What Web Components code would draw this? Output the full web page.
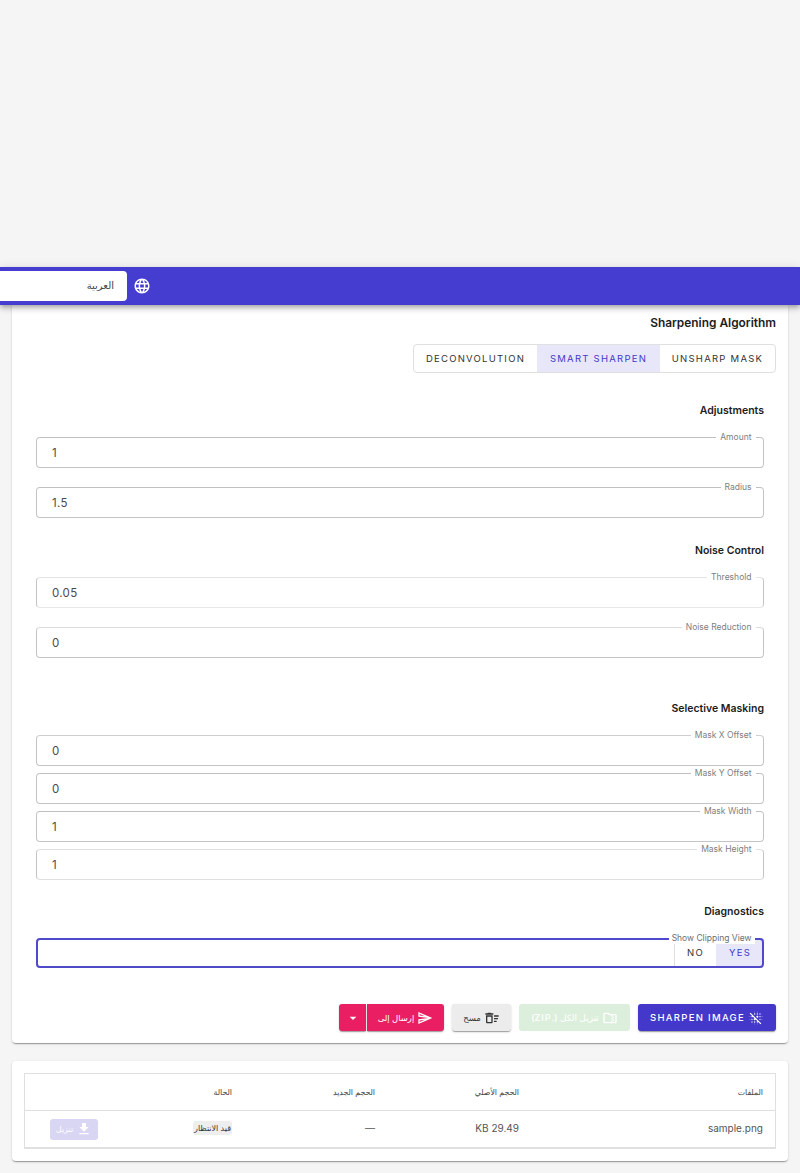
<!DOCTYPE html>
<html lang="ar"><head><meta charset="utf-8"><title>Sharpen</title>
<style>
html,body{margin:0;padding:0;background:#f5f5f5;overflow-x:hidden}
body{padding-top:267px;font-family:Inter,"Noto Sans",sans-serif;color:#1f1f1f}
</style></head><body>
<x-app-bar></x-app-bar>
<x-card class="main">
  <x-title lead>Sharpening Algorithm</x-title>
  <x-toggle style="margin-top:13px">
    <span data-w="115">UNSHARP MASK</span><span data-on data-w="123">SMART SHARPEN</span><span data-w="123">DECONVOLUTION</span>
  </x-toggle>
  <x-group style="margin-top:30px"><x-title inset>Adjustments</x-title>
    <x-field label="Amount" style="margin-top:18px">1</x-field>
    <x-field label="Radius" style="margin-top:19px">1.5</x-field>
  </x-group>
  <x-group style="margin-top:25px"><x-title inset>Noise Control</x-title>
    <x-field label="Threshold" style="margin-top:18px;--tb:#e4e4e4;--bb:#e8e8e8">0.05</x-field>
    <x-field label="Noise Reduction" style="margin-top:19px;--tb:#dcdcdc">0</x-field>
  </x-group>
  <x-group style="margin-top:43px"><x-title inset>Selective Masking</x-title>
    <x-field label="Mask X Offset" style="margin-top:18px;--tb:#cfcfcf">0</x-field>
    <x-field label="Mask Y Offset" style="margin-top:7px">0</x-field>
    <x-field label="Mask Width" style="margin-top:7px">1</x-field>
    <x-field label="Mask Height" style="margin-top:7px;--tb:#e0e0e0;--bb:#e0e0e0">1</x-field>
  </x-group>
  <x-group style="margin-top:24px"><x-title inset>Diagnostics</x-title>
    <x-field label="Show Clipping View" focused style="margin-top:18px"><x-toggle slot="end" flat><span data-on data-w="48">YES</span><span data-w="41">NO</span></x-toggle></x-field>
  </x-group>
  <x-actions></x-actions>
</x-card>
<x-card class="table"><x-file-table></x-file-table></x-card>

<template id="t-bar"><style>
:host{display:flex;align-items:center;height:38px;background:#443dd0;position:relative;z-index:2;box-shadow:0 2px 4px -1px rgba(0,0,0,.2),0 4px 5px rgba(0,0,0,.14),0 1px 10px rgba(0,0,0,.12);direction:ltr}
.sel{margin-left:-10px;width:137px;height:30px;box-sizing:border-box;background:#fff;border-radius:4px;display:flex;align-items:center;justify-content:flex-start;padding:0 13px 2px 0;font:10px "DejaVu Sans","Noto Sans",sans-serif;color:#444}
svg{width:18px;height:18px;margin-left:6px;fill:#fff}
</style><div class="sel" dir="rtl">العربية</div>
<svg viewBox="0 0 24 24"><path d="M11.99 2C6.47 2 2 6.48 2 12s4.47 10 9.99 10C17.52 22 22 17.52 22 12S17.52 2 11.99 2zm6.93 6h-2.95c-.32-1.25-.78-2.45-1.38-3.56 1.84.63 3.37 1.91 4.33 3.56zM12 4.04c.83 1.2 1.48 2.53 1.91 3.96h-3.82c.43-1.43 1.08-2.76 1.91-3.96zM4.26 14C4.1 13.36 4 12.69 4 12s.1-1.36.26-2h3.38c-.08.66-.14 1.32-.14 2 0 .68.06 1.34.14 2H4.26zm.82 2h2.95c.32 1.25.78 2.45 1.38 3.56-1.84-.63-3.37-1.9-4.33-3.56zm2.95-8H5.08c.96-1.66 2.49-2.93 4.33-3.56C8.81 5.55 8.35 6.75 8.03 8zM12 19.96c-.83-1.2-1.48-2.53-1.91-3.96h3.82c-.43 1.43-1.08 2.76-1.91 3.96zM14.34 14H9.66c-.09-.66-.16-1.32-.16-2 0-.68.07-1.35.16-2h4.68c.09.65.16 1.32.16 2 0 .68-.07 1.34-.16 2zm.25 5.56c.6-1.11 1.06-2.31 1.38-3.56h2.95c-.96 1.65-2.49 2.93-4.33 3.56zM16.36 14c.08-.66.14-1.32.14-2 0-.68-.06-1.34-.14-2h3.38c.16.64.26 1.31.26 2s-.1 1.36-.26 2h-3.38z"/></svg></template>

<template id="t-card"><style>
:host{display:block;margin:0 12px;background:#fff;border-radius:0 0 4px 4px;box-shadow:0 2px 1px -1px rgba(0,0,0,.2),0 1px 1px rgba(0,0,0,.14),0 1px 3px rgba(0,0,0,.12);padding:10px 12px 12px;direction:rtl}
:host(.table){margin-top:18px;margin-bottom:12px;padding:12px;border-radius:4px}
</style><slot></slot></template>

<template id="t-title"><style>
:host{display:block;font:600 10.5px/16px Inter,sans-serif;color:#1c1c1c;text-align:right}
:host([lead]){font-size:11.9px}
:host([inset]){padding-right:12px}
</style><slot></slot></template>

<template id="t-group"><style>:host{display:block}</style><slot></slot></template>

<template id="t-toggle"><style>
:host{display:flex;width:max-content;height:29px;box-sizing:border-box;border:1px solid #e0e0e0;border-radius:4px;overflow:hidden;background:#fff;font:400 9.5px/27px Inter,sans-serif;letter-spacing:1.25px;color:#333;direction:rtl}
:host([flat]){height:100%;border-width:0 0 0 1px;border-radius:0 3px 3px 0;line-height:30px}
::slotted(span){display:block;text-align:center;white-space:nowrap}
::slotted(span[data-on]){background:#e8e6f9;color:#4338ca}
</style><slot></slot></template>

<template id="t-field"><style>
:host{display:block;position:relative;height:31px;margin-inline:12px;direction:rtl}
fieldset{position:absolute;inset:-5px 0 0 0;margin:0;padding:0 7.5px;border:1px solid #c4c4c4;border-top-color:var(--tb,#c0c0c0);border-bottom-color:var(--bb,#c4c4c4);border-radius:4px;min-width:0;z-index:1;pointer-events:none}
legend{padding:0 4px;font:400 8.5px/11px Inter,sans-serif;color:#808080}
.v{position:absolute;inset:0;display:flex;align-items:center;direction:ltr;padding-left:16px;font:400 11.5px Inter,sans-serif;color:#4a4a4a;letter-spacing:.3px}
.end{position:absolute;top:0;bottom:0;right:0;display:flex}
:host([focused]){height:30px}
:host([focused]) fieldset{border:2px solid #5049c9;inset:-5px 0 0 0}
:host([focused]) legend{color:#6e6e6e;background:#fff;padding:0 3px}
</style><fieldset><legend></legend></fieldset><div class="v"><slot></slot></div><div class="end"><slot name="end"></slot></div></template>

<template id="t-btn"><style>
:host{display:inline-flex;align-items:center;justify-content:center;gap:3px;height:27px;box-sizing:border-box;border-radius:3px;font:500 9.5px Inter,"DejaVu Sans",sans-serif;letter-spacing:1.3px;white-space:nowrap;color:#fff;background:#4338ca;box-shadow:0 2px 1px -1px rgba(0,0,0,.2),0 1px 1px rgba(0,0,0,.14),0 1px 3px rgba(0,0,0,.12)}
:host([kind=green]){background:#dcefdc;color:#fff;box-shadow:none;font-size:9px;letter-spacing:1px}
:host([kind=grey]){background:#ececec;color:#333;font-size:8.5px;letter-spacing:0}
:host([kind=pink]){background:#e91e63;font-size:8.5px;letter-spacing:0}
:host([kind=pale]){background:#d9d6f4;box-shadow:none;height:21px;font-size:8px;letter-spacing:0}
::slotted(svg){width:16px;height:16px;fill:currentColor;flex:none}
</style><slot></slot></template>

<template id="t-actions"><style>
:host{display:flex;justify-content:flex-start;gap:8px;margin-top:36px;direction:rtl}
x-btn.main{width:138px}x-btn.zip{width:111px}x-btn.clr{width:59px}
.split{display:flex;direction:rtl}
.split x-btn:first-child{width:77px;border-radius:0 3px 3px 0}
.split x-btn:last-child{width:27px;border-radius:3px 0 0 3px;margin-right:1px}
</style>
<x-btn class="main"><svg viewBox="0 0 24 24"><path d="M14 7c.55 0 1-.45 1-1s-.45-1-1-1-1 .45-1 1 .45 1 1 1zm-.2 4.48l.2.02c.83 0 1.5-.67 1.5-1.5s-.67-1.5-1.5-1.5-1.5.67-1.5 1.5l.02.2c.09.67.61 1.19 1.28 1.28zM14 3.5c.28 0 .5-.22.5-.5s-.22-.5-.5-.5-.5.22-.5.5.22.5.5.5zm-4 0c.28 0 .5-.22.5-.5s-.22-.5-.5-.5-.5.22-.5.5.22.5.5.5zm11 7c.28 0 .5-.22.5-.5s-.22-.5-.5-.5-.5.22-.5.5.22.5.5.5zM10 7c.55 0 1-.45 1-1s-.45-1-1-1-1 .45-1 1 .45 1 1 1zm8 8c.55 0 1-.45 1-1s-.45-1-1-1-1 .45-1 1 .45 1 1 1zm0-4c.55 0 1-.45 1-1s-.45-1-1-1-1 .45-1 1 .45 1 1 1zm0-4c.55 0 1-.45 1-1s-.45-1-1-1-1 .45-1 1 .45 1 1 1zm-4 13.5c-.28 0-.5.22-.5.5s.22.5.5.5.5-.22.5-.5-.22-.5-.5-.5zM2.5 5.27l3.78 3.78L6 9c-.55 0-1 .45-1 1s.45 1 1 1 1-.45 1-1c0-.1-.03-.19-.06-.28l2.81 2.81c-.71.11-1.25.73-1.25 1.47 0 .83.67 1.5 1.5 1.5.74 0 1.36-.54 1.47-1.25l2.81 2.81c-.09-.03-.18-.06-.28-.06-.55 0-1 .45-1 1s.45 1 1 1 1-.45 1-1c0-.1-.03-.19-.06-.28l3.78 3.78L20 20.23 3.77 4 2.5 5.27zM10 17c-.55 0-1 .45-1 1s.45 1 1 1 1-.45 1-1-.45-1-1-1zm11-3.5c-.28 0-.5.22-.5.5s.22.5.5.5.5-.22.5-.5-.22-.5-.5-.5zM6 13c-.55 0-1 .45-1 1s.45 1 1 1 1-.45 1-1-.45-1-1-1zM3 9.5c-.28 0-.5.22-.5.5s.22.5.5.5.5-.22.5-.5-.22-.5-.5-.5zm7 11c-.28 0-.5.22-.5.5s.22.5.5.5.5-.22.5-.5-.22-.5-.5-.5zM6 17c-.55 0-1 .45-1 1s.45 1 1 1 1-.45 1-1-.45-1-1-1zm-3-3.5c-.28 0-.5.22-.5.5s.22.5.5.5.5-.22.5-.5-.22-.5-.5-.5z"/></svg>SHARPEN IMAGE</x-btn>
<x-btn class="zip" kind="green"><svg viewBox="0 0 24 24"><path d="M20 6h-8l-2-2H4c-1.1 0-2 .9-2 2v12c0 1.1.9 2 2 2h16c1.1 0 2-.9 2-2V8c0-1.1-.9-2-2-2zm-4 10h2v-2h-2v-2h2v-2h-2V8h4v10h-4v-2zm0 0h-2v2H4V6h5.17l2 2H14v2h2v2h-2v2h2v2z"/></svg>تنزيل الكل (.ZIP)</x-btn>
<x-btn class="clr" kind="grey"><svg viewBox="0 0 24 24"><path d="M15 16h4v2h-4zm0-8h7v2h-7zm0 4h6v2h-6zM3 18c0 1.1.9 2 2 2h6c1.1 0 2-.9 2-2V8H3v10zm2-8h6v8H5v-8zm5-6H6L5 5H2v2h12V5h-3z"/></svg>مسح</x-btn>
<div class="split"><x-btn kind="pink"><svg viewBox="0 0 24 24"><path d="M4.01 6.03l7.51 3.22-7.52-1 .01-2.22m7.5 8.72L4 17.97v-2.22l7.51-1M2.01 3L2 10l15 2-15 2 .01 7L23 12 2.01 3z"/></svg>إرسال إلى</x-btn><x-btn kind="pink"><svg viewBox="0 0 24 24"><path d="M7 10l5 5 5-5z"/></svg></x-btn></div>
</template>

<template id="t-table"><style>
:host{display:block;border:1px solid #e0e0e0;border-bottom-width:2px;font:400 10px Inter,"DejaVu Sans",sans-serif;color:#555;direction:rtl}
.r{display:grid;grid-template-columns:244px 144px 143px 134px 85px}
.r>div{display:flex;align-items:center;padding:0 12px;min-width:0}
.h{height:36px;border-bottom:1px solid #e0e0e0;font-size:7.8px;color:#444}
.b{height:36px}
.r.b>div.t{padding-bottom:2px}
.chip{background:#eee;border-radius:3px;padding:2px 1px;font-size:8px;color:#333}
</style>
<div class="r h"><div>الملفات</div><div>الحجم الأصلي</div><div>الحجم الجديد</div><div>الحالة</div><div></div></div>
<div class="r b"><div class="t">sample.png</div><div class="t">29.49 KB</div><div class="t">—</div><div class="t"><span class="chip">قيد الانتظار</span></div><div><x-btn kind="pale" style="width:48px"><svg viewBox="0 0 24 24"><path d="M5 20h14v-2H5v2zM19 9h-4V3H9v6H5l7 7 7-7z"/></svg>تنزيل</x-btn></div></div>
</template>

<script>
const mk=(name,id,setup)=>customElements.define(name,class extends HTMLElement{
  constructor(){super();this.attachShadow({mode:'open'}).appendChild(document.getElementById(id).content.cloneNode(true));}
  connectedCallback(){setup&&setup(this)}
});
mk('x-btn','t-btn');
mk('x-app-bar','t-bar');
mk('x-card','t-card');
mk('x-title','t-title');
mk('x-group','t-group');
mk('x-toggle','t-toggle',el=>{
  el.querySelectorAll('span').forEach(s=>{s.style.width=s.dataset.w+'px'});
});
mk('x-field','t-field',el=>{el.shadowRoot.querySelector('legend').textContent=el.getAttribute('label')});
mk('x-actions','t-actions');
mk('x-file-table','t-table');
</script>
</body></html>
